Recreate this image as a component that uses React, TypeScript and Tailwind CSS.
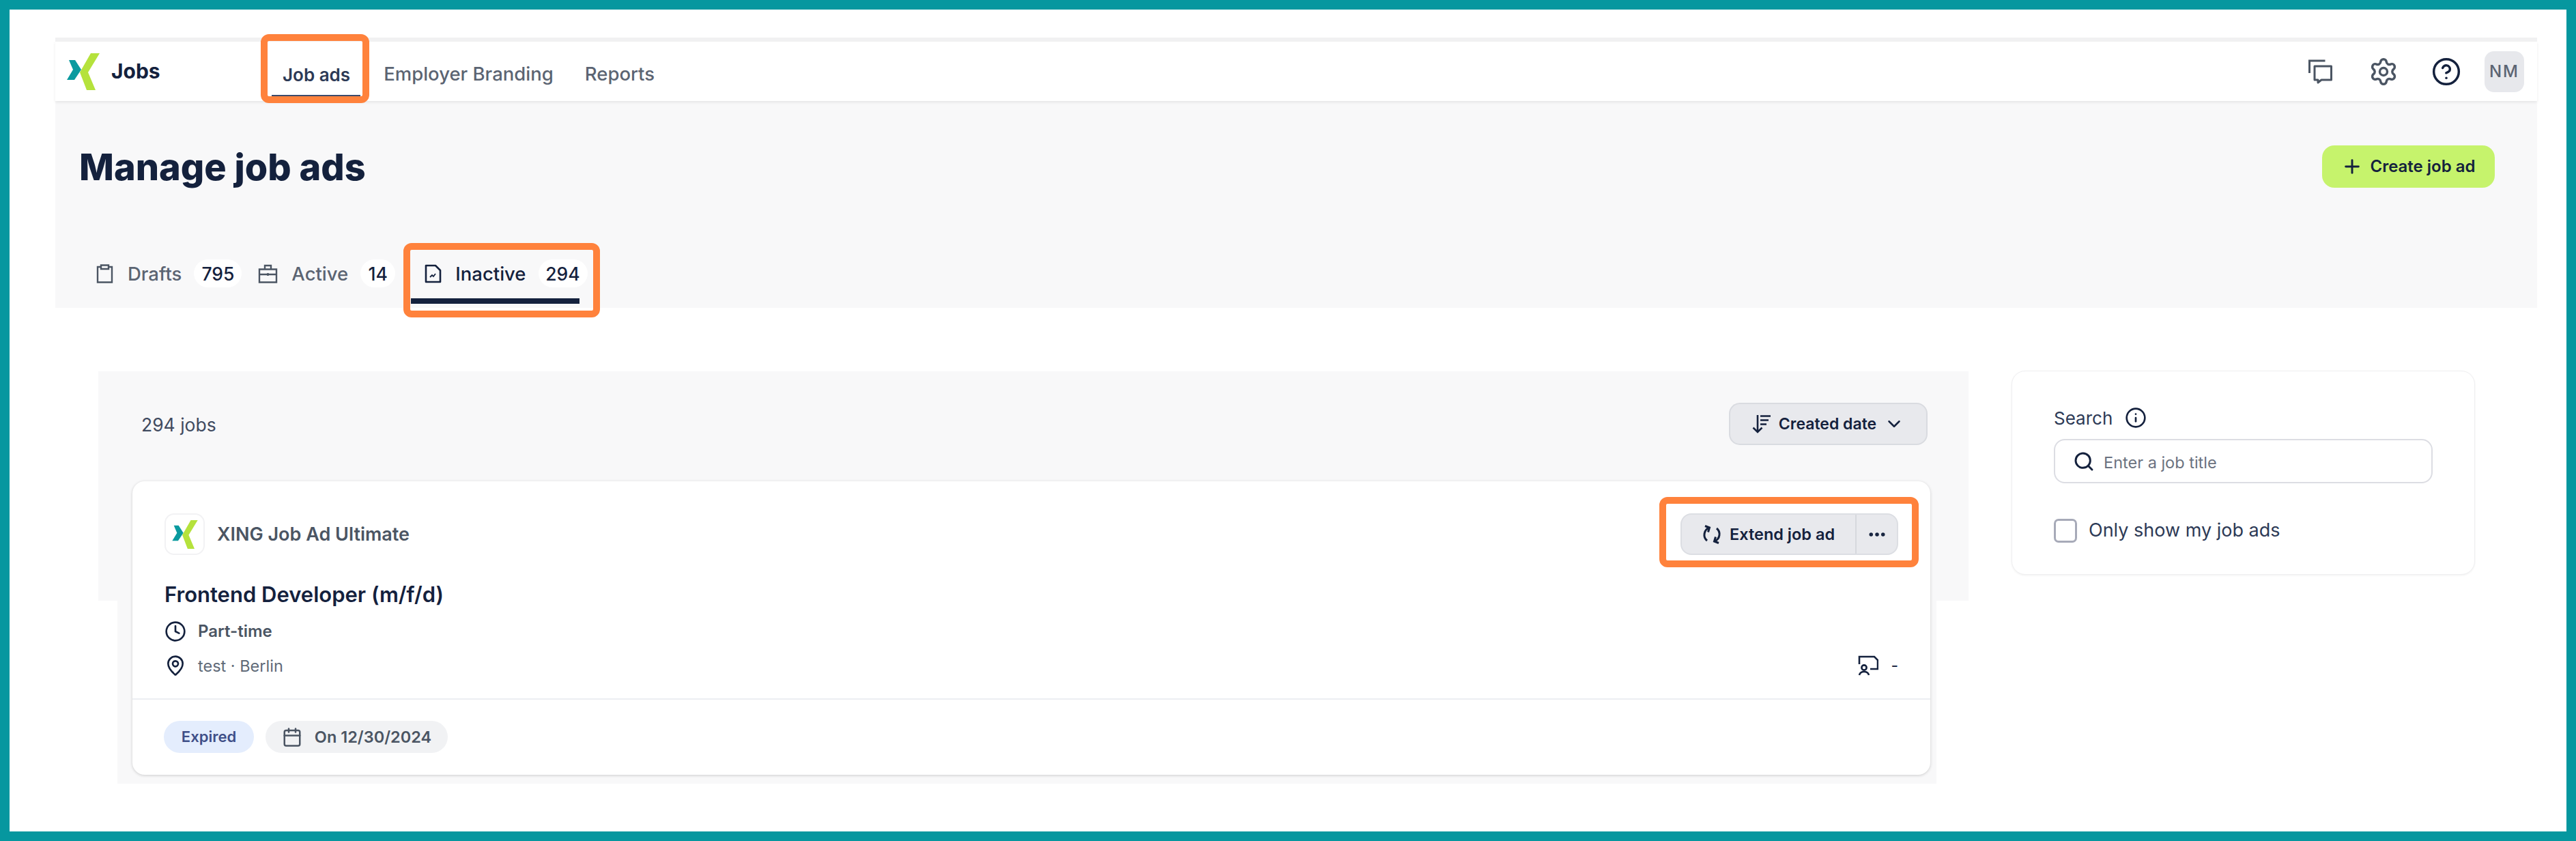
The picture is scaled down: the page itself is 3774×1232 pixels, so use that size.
import { Calendar, ChevronDown, CircleHelp, Clock, Info, MapPin, MoreHorizontal, Plus, Search, Settings } from 'lucide-react';

const ink = 'text-[#14213d]';

function XingLogo({ className }: { className: string }) {
  return (
    <svg viewBox="0 0 48 54" className={className}>
      <polygon points="3,10 12,10 21,24 11,39 0,39 9,24" fill="#0a9a9f" />
      <polygon points="35,0 48,0 31,28 42,54 29,54 19,28" fill="#b5e23c" />
    </svg>
  );
}

function ChatIcon() {
  return (
    <svg viewBox="0 0 35 36" fill="none" stroke="#4b5563" strokeWidth="3" className="h-[36px] w-[35px]">
      <path d="M1.5 20V2h23" />
      <path d="M9 10h24.5v20H19l-5 4v-4H9z" strokeLinejoin="round" />
    </svg>
  );
}

function SortIcon() {
  return (
    <svg viewBox="0 0 28 28" fill="none" stroke="#14213d" strokeWidth="2.6" className="h-[28px] w-[28px]">
      <path d="M8 1v25M1.5 19.5 8 26l6.5-6.5" />
      <path d="M12 2.5h15M12 8.5h12M12 14.5h9" />
    </svg>
  );
}

function ExtendIcon() {
  return (
    <svg viewBox="0 0 28 28" fill="none" stroke="#14213d" strokeWidth="3" className="h-[28px] w-[28px]">
      <path d="M10 4.2A11 11 0 0 0 7 23" />
      <path d="M18 23.8A11 11 0 0 0 21 5" />
      <path d="M4 1.5l6.5 2.5L8.5 10.5M24 26.5l-6.5-2.5 2-6.5" />
    </svg>
  );
}

function ClipboardIcon() {
  return (
    <svg viewBox="0 0 27 28" fill="none" stroke="#4b5563" strokeWidth="2.4" className="h-[28px] w-[27px]">
      <path d="M8 4H3v22.5h21V4h-5" />
      <path d="M8 1.5h11V7H8z" />
    </svg>
  );
}

function BagIcon() {
  return (
    <svg viewBox="0 0 29 28" fill="none" stroke="#4b5563" strokeWidth="2.4" className="h-[28px] w-[29px]">
      <path d="M2 7.5h25v19H2zM2 15h25M10 7.5V2h9v5.5M14.5 13v4" />
    </svg>
  );
}

function InactiveIcon() {
  return (
    <svg viewBox="0 0 25 28" fill="none" stroke="#14213d" strokeWidth="2.6" className="h-[28px] w-[25px]">
      <path d="M2 2h14l7 7v17H2z" strokeLinejoin="round" />
      <path d="M8 19l3-3 2 2 3-4" strokeWidth="1.8" />
    </svg>
  );
}

function RemoteIcon() {
  return (
    <svg viewBox="0 0 30 30" fill="none" stroke="#14213d" strokeWidth="2.6" className="h-[30px] w-[30px]">
      <path d="M2 13V2h22l5 5v13H18" />
      <circle cx="9" cy="18" r="3.6" />
      <path d="M2 29c1-4 3.5-5 7-5s6 1 7 5" />
    </svg>
  );
}

// orange marker drawn by the author of the screenshot
function Marker({ className }: { className: string }) {
  return <div className={`pointer-events-none absolute rounded-[12px] border-[10px] border-[#ff823c] ${className}`} />;
}

function Tab({ icon, label, count, badgeWidth, active }: { icon: React.ReactNode; label: string; count: string; badgeWidth: string; active?: boolean }) {
  return (
    <div className="flex items-center">
      <div className="mr-[20px] flex">{icon}</div>
      <span className={`mr-[18px] pt-[2px] text-[27.5px] font-medium ${active ? ink : 'text-[#5b6472]'}`}>{label}</span>
      <span className={`flex h-[41px] items-center justify-center rounded-full bg-white pt-[2px] text-[26.5px] font-medium ${ink} ${badgeWidth}`}>{count}</span>
    </div>
  );
}

export default function App() {
  return (
    <div className="h-[1232px] w-[3774px] overflow-hidden border-[14px] border-[#06979f] bg-white pt-[41px] font-['Inter',sans-serif]">
      <header className="ml-[67px] w-[3636px]">
        <div className="h-[6px] bg-[#f1f1f2]" />
        <nav className="relative flex h-[87px] items-center bg-white pl-[17px] pr-[19px] shadow-[0_2px_4px_rgba(0,0,0,0.08)]">
          <XingLogo className="h-[54px] w-[48px]" />
          <span className={`ml-[17px] w-[251px] text-[30px] font-bold ${ink}`}>Jobs</span>
          <div className="relative mr-[49px] flex h-full items-center pt-[9px]">
            <span className="text-[26px] font-semibold text-[#2d3a56]">Job ads</span>
            <div className="absolute bottom-[7px] left-[-16px] right-[-15px] h-[2px] bg-[#3b4a6b]" />
            <Marker className="-top-[11px] -bottom-[3px] -left-[32px] -right-[28px]" />
          </div>
          <span className="mr-[46px] pt-[9px] text-[27.5px] font-medium text-[#5b6472]">Employer Branding</span>
          <span className="pt-[9px] text-[27.5px] font-medium text-[#5b6472]">Reports</span>
          <div className="ml-auto flex items-center">
            <ChatIcon />
            <Settings className="ml-[53px] h-[44px] w-[44px] text-[#4b5563]" strokeWidth={1.9} />
            <CircleHelp className="ml-[48px] h-[44px] w-[44px] text-[#14213d]" strokeWidth={1.9} />
            <div className="ml-[34px] flex h-[60px] w-[58px] items-center justify-center rounded-[14px] bg-[#e7e8ec] text-[24px] font-medium tracking-[2px] text-[#5b6472]">NM</div>
          </div>
        </nav>
        <section className="h-[303px] bg-[#f8f8f9] pl-[35px] pr-[62px] pt-[65px]">
          <div className="flex h-[62px] items-center justify-between">
            <h1 className={`text-[54px] font-extrabold ${ink}`}>Manage job ads</h1>
            <button className={`flex h-[62px] w-[253px] items-center justify-center gap-[10px] rounded-[18px] bg-[#c6f36c] text-[24px] font-semibold ${ink}`}>
              <Plus className="h-[32px] w-[32px]" strokeWidth={2.2} />
              Create job ad
            </button>
          </div>
          <div className="ml-[24px] mt-[104px] flex items-center">
            <Tab icon={<ClipboardIcon />} label="Drafts" count="795" badgeWidth="w-[70px]" />
            <div className="w-[24px]" />
            <Tab icon={<BagIcon />} label="Active" count="14" badgeWidth="w-[51px]" />
            <div className="relative ml-[43px]">
              <Tab icon={<InactiveIcon />} label="Inactive" count="294" badgeWidth="w-[72px]" active />
              <div className="absolute -bottom-[23px] -left-[20px] right-[12px] h-[8px] bg-[#14213d]" />
              <Marker className="-top-[23px] -bottom-[43px] -left-[31px] -right-[18px]" />
            </div>
          </div>
        </section>
      </header>

      <main className="ml-[130px] mt-[93px] flex items-start">
        <div className="w-[2740px]">
          <div className="h-[336px] bg-[#f8f8f9] pl-[63px] pr-[60px] pt-[46px]">
            <div className="flex h-[62px] items-center justify-between">
              <span className="pt-[4px] text-[26.5px] text-[#3f4a5f]">294 jobs</span>
              <button className={`flex h-[62px] w-[291px] items-center justify-center gap-[11px] rounded-[16px] border-2 border-[#d9dbe0] bg-[#e8e9ed] text-[23px] font-semibold ${ink}`}>
                <SortIcon />
                Created date
                <ChevronDown className="h-[30px] w-[30px]" strokeWidth={2} />
              </button>
            </div>
          </div>
          <div className="ml-[28px] flex h-[268px] w-[2665px] flex-col bg-[#f8f8f9]">
            <article className="relative z-10 ml-[22px] -mt-[175px] h-[430px] w-[2634px] rounded-[18px] bg-white shadow-[0_1px_4px_rgba(0,0,0,0.18)]">
              <div className="h-[320px] border-b-2 border-[#eceef2] px-[47px] pt-[47px]">
                <div className="flex items-center justify-between">
                  <div className="flex items-center">
                    <div className="flex h-[61px] w-[59px] items-center justify-center rounded-[14px] border-2 border-[#f2f2f4] bg-white">
                      <XingLogo className="h-[42px] w-[38px]" />
                    </div>
                    <span className="ml-[18px] pt-[2px] text-[27px] font-semibold text-[#4b5563]">XING Job Ad Ultimate</span>
                  </div>
                  <div className="relative">
                    <div className={`flex h-[61px] w-[319px] items-center rounded-[16px] border-2 border-[#dcdee3] bg-[#e8e9ed] text-[23.5px] font-semibold ${ink}`}>
                      <div className="flex h-full w-[256px] items-center justify-center gap-[12px] border-r-2 border-[#d6d8dd]">
                        <ExtendIcon />
                        Extend job ad
                      </div>
                      <div className="flex flex-1 items-center justify-center">
                        <MoreHorizontal className="h-[30px] w-[30px]" strokeWidth={2.4} />
                      </div>
                    </div>
                    <Marker className="-top-[24px] -bottom-[18px] -left-[31px] -right-[30px]" />
                  </div>
                </div>
                <h2 className={`mt-[35px] text-[31px] font-semibold ${ink}`}>Frontend Developer (m/f/d)</h2>
                <div className="mt-[12px] flex items-center text-[24px] font-semibold text-[#4b5563]">
                  <Clock className="mr-[17px] h-[32px] w-[32px] text-[#14213d]" strokeWidth={2} />
                  Part-time
                </div>
                <div className="mt-[15px] flex items-center justify-between">
                  <div className="flex items-center text-[23.5px] text-[#606a78]">
                    <MapPin className="mr-[17px] h-[32px] w-[32px] text-[#14213d]" strokeWidth={2} />
                    test · Berlin
                  </div>
                  <div className={`flex items-center gap-[18px] text-[23px] ${ink}`}>
                    <RemoteIcon />
                    -
                  </div>
                </div>
              </div>
              <div className="flex items-center gap-[17px] px-[46px] pt-[31px]">
                <span className="flex h-[47px] w-[132px] items-center justify-center rounded-full bg-[#e4edfd] text-[22px] font-semibold text-[#3f4f88]">Expired</span>
                <span className="flex h-[47px] w-[267px] items-center justify-center gap-[18px] rounded-full bg-[#f1f2f4] text-[23.5px] font-semibold text-[#4b5563]">
                  <Calendar className="h-[30px] w-[30px]" strokeWidth={2} />
                  On 12/30/2024
                </span>
              </div>
            </article>
          </div>
        </div>

        <aside className="-mt-[1px] ml-[63px] h-[299px] w-[679px] rounded-[20px] border border-[#efeff1] bg-white px-[61px] pt-[50px] shadow-[0_1px_3px_rgba(0,0,0,0.06)]">
          <div className="flex h-[36px] items-center gap-[18px] text-[26px] text-[#2d3a56]">
            Search
            <Info className="h-[32px] w-[32px] text-[#14213d]" strokeWidth={2} />
          </div>
          <div className="mt-[13px] flex h-[65px] w-[555px] items-center rounded-[16px] border-2 border-[#dcdde3] pl-[26px]">
            <Search className="h-[32px] w-[32px] text-[#14213d]" strokeWidth={2.2} />
            <span className="ml-[13px] pt-[4px] text-[23.5px] text-[#6b7280]">Enter a job title</span>
          </div>
          <label className="mt-[49px] flex items-center">
            <span className="h-[35px] w-[34px] rounded-[7px] border-[3px] border-[#a7aab8]" />
            <span className="ml-[17px] text-[27px] text-[#2d3a56]">Only show my job ads</span>
          </label>
        </aside>
      </main>
    </div>
  );
}
